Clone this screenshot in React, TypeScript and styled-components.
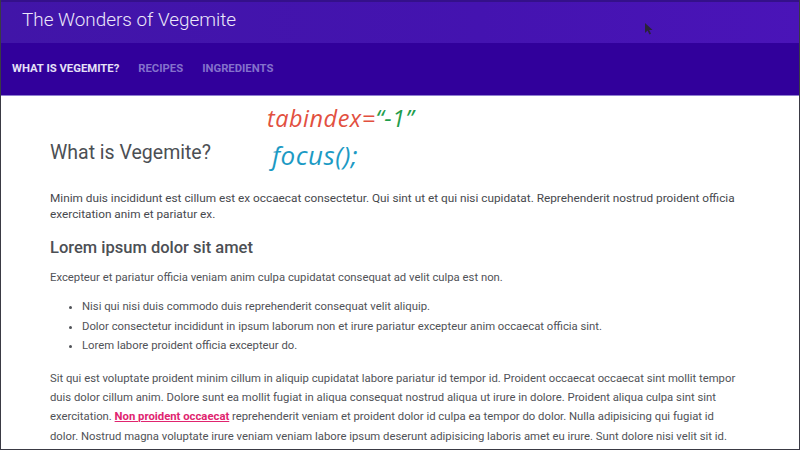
import React from "react";
import styled, { createGlobalStyle } from "styled-components";

const GlobalStyle = createGlobalStyle`
  html, body {
    margin: 0;
    padding: 0;
    background: #fff;
  }
`;

const Page = styled.div`
  position: relative;
  width: 800px;
  height: 450px;
  box-sizing: border-box;
  overflow: hidden;
  background: #fff;
  border-left: 1px solid #3a3a44;
  border-right: 1px solid #3a3a44;
  border-bottom: 1px solid #3a3a44;
  font-family: Roboto, "Liberation Sans", sans-serif;
  color: #505257;
`;

const Header = styled.header`
  border-bottom: 1px solid #8f7fd0;
`;

const TitleBar = styled.div`
  height: 43px;
  box-sizing: border-box;
  padding: 6px 0 0 21px;
  background: linear-gradient(90deg, #4115a8 0%, #4413b0 60%, #4a14b8 100%);
  border-top: 2px solid #34108a;
`;

const Title = styled.h1`
  margin: 0;
  font-size: 18.9px;
  line-height: 24px;
  font-weight: 300;
  color: #ece8fa;
`;

const Tabs = styled.nav`
  height: 52px;
  box-sizing: border-box;
  padding: 19px 0 0 11px;
  display: flex;
  gap: 19px;
  background: #31009b;
`;

const Tab = styled.span<{ $active?: boolean }>`
  font-size: 11.3px;
  line-height: 14px;
  font-weight: 700;
  color: ${(p) => (p.$active ? "#e6e1f7" : "#8471cc")};
`;

const Cursor = styled.svg`
  position: absolute;
  left: 643px;
  top: 22px;
`;

const Main = styled.main`
  padding: 44px 0 0 49px;
  width: 690px;
`;

const Heading = styled.h2`
  margin: 0 0 24px;
  font-size: 19.5px;
  line-height: 26px;
  font-weight: 400;
  color: #4c4f54;
`;

const Lead = styled.p`
  margin: 0 0 14px;
  font-size: 11.8px;
  line-height: 16px;
  color: #47494e;
`;

const SubHeading = styled.h3`
  margin: 0 0 8px;
  font-size: 16.5px;
  line-height: 24px;
  font-weight: 500;
  color: #4c4f54;
`;

const Paragraph = styled.p`
  margin: 0 0 10px;
  font-size: 11.3px;
  line-height: 19.3px;
`;

const List = styled.ul`
  margin: 0 0 13px;
  padding: 0 0 0 32px;
  font-size: 11.3px;
  line-height: 19.5px;
`;

const Link = styled.a`
  color: #e0246f;
  font-weight: 700;
  text-decoration: underline;
`;

const Note = styled.div<{ $color: string; $left: number; $top: number; $size: number }>`
  position: absolute;
  left: ${(p) => p.$left}px;
  top: ${(p) => p.$top}px;
  font-family: "Open Sans", "Liberation Sans", sans-serif;
  font-style: italic;
  font-size: ${(p) => p.$size}px;
  line-height: 28px;
  letter-spacing: 0.5px;
  white-space: nowrap;
  color: ${(p) => p.$color};
`;

const Quoted = styled.span`
  color: #1f9d4d;
`;

export default function App() {
  return (
    <Page>
      <GlobalStyle />
      <Header>
        <TitleBar>
          <Title>The Wonders of Vegemite</Title>
        </TitleBar>
        <Tabs>
          <Tab $active>WHAT IS VEGEMITE?</Tab>
          <Tab>RECIPES</Tab>
          <Tab>INGREDIENTS</Tab>
        </Tabs>
      </Header>
      <Cursor width="10" height="14" viewBox="0 0 10 14">
        <path d="M1 1 L1 11 L3.6 8.6 L5.4 12.5 L7 11.8 L5.2 8 L8.6 8 Z" fill="#2a2438" />
      </Cursor>
      <Note $color="#e2503f" $left={266} $top={104} $size={23.5}>
        tabindex=<Quoted>“-1”</Quoted>
      </Note>
      <Note $color="#1c9ac4" $left={271} $top={141} $size={26}>
        focus();
      </Note>
      <Main>
        <Heading>What is Vegemite?</Heading>
        <Lead>
          Minim duis incididunt est cillum est ex occaecat consectetur. Qui sint ut et qui nisi cupidatat. Reprehenderit
          nostrud proident officia exercitation anim et pariatur ex.
        </Lead>
        <SubHeading>Lorem ipsum dolor sit amet</SubHeading>
        <Paragraph>Excepteur et pariatur officia veniam anim culpa cupidatat consequat ad velit culpa est non.</Paragraph>
        <List>
          <li>Nisi qui nisi duis commodo duis reprehenderit consequat velit aliquip.</li>
          <li>Dolor consectetur incididunt in ipsum laborum non et irure pariatur excepteur anim occaecat officia sint.</li>
          <li>Lorem labore proident officia excepteur do.</li>
        </List>
        <Paragraph>
          Sit qui est voluptate proident minim cillum in aliquip cupidatat labore pariatur id tempor id. Proident occaecat
          occaecat sint mollit tempor duis dolor cillum anim. Dolore sunt ea mollit fugiat in aliqua consequat nostrud aliqua
          ut irure in dolore. Proident aliqua culpa sint sint exercitation. <Link>Non proident occaecat</Link> reprehenderit
          veniam et proident dolor id culpa ea tempor do dolor. Nulla adipisicing qui fugiat id dolor. Nostrud magna voluptate
          irure veniam veniam labore ipsum deserunt adipisicing laboris amet eu irure. Sunt dolore nisi velit sit id. Magna
          dolor do culpa ipsum et
        </Paragraph>
      </Main>
    </Page>
  );
}
